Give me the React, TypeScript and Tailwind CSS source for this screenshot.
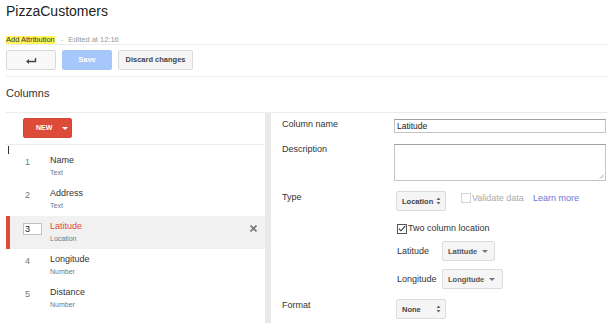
import React from "react";

const columns = [
  { n: "1", name: "Name", type: "Text" },
  { n: "2", name: "Address", type: "Text" },
  { n: "3", name: "Latitude", type: "Location", selected: true },
  { n: "4", name: "Longitude", type: "Number" },
  { n: "5", name: "Distance", type: "Number" },
];

function UpDown() {
  return (
    <svg width="5" height="8" viewBox="0 0 5 8" className="shrink-0">
      <path d="M0.5 3 L2.5 0.5 L4.5 3 Z M0.5 5 L2.5 7.5 L4.5 5 Z" fill="#666" />
    </svg>
  );
}

function Caret({ color = "#777" }: { color?: string }) {
  return (
    <svg width="6" height="3" viewBox="0 0 6 3" className="shrink-0">
      <path d="M0 0 L6 0 L3 3 Z" fill={color} />
    </svg>
  );
}

function Select({ label, w, kind }: { label: string; w: string; kind: "updown" | "caret" }) {
  return (
    <div
      className={`${w} h-[20px] flex items-center bg-[#f5f5f5] border border-[#dcdcdc] rounded-[2px] text-[7.5px] font-bold text-[#444] shrink-0 ${
        kind === "updown" ? "justify-between pl-[5px] pr-[4px]" : "pl-[5px] gap-[5px] text-[#555]"
      }`}
    >
      <span>{label}</span>
      {kind === "updown" ? <UpDown /> : <Caret />}
    </div>
  );
}

export default function App() {
  return (
    <div className="w-[609px] h-[323px] overflow-hidden bg-white font-['Liberation_Sans',Arial,sans-serif] text-[#333]">
      <div className="pl-[6px]">
        {/* Title + attribution */}
        <div className="pt-[3px] h-[19px] text-[14px] leading-[16px] text-[#222]">PizzaCustomers</div>
        <div className="mt-[17px] h-[8px] flex items-center text-[7.5px] leading-[8px]">
          <span className="bg-[#fff65c] text-[#333]">Add Attribution</span>
          <span className="ml-[6px] text-[#bbb]">-</span>
          <span className="ml-[5px] text-[#999]">Edited at 12:16</span>
        </div>
        <div className="h-px bg-[#ebebeb]" />

        {/* Toolbar */}
        <div className="mt-[5px] flex gap-[6px] h-[20px]">
          <div className="w-[50px] h-[20px] flex items-center justify-center bg-[#f8f8f8] border border-[#d9d9d9] rounded-[2px]">
            <svg width="11" height="7" viewBox="0 0 11 7">
              <path d="M2 4.5 H9.5 V1" fill="none" stroke="#444" strokeWidth="1.4" />
              <path d="M0 4.5 L3 2 L3 7 Z" fill="#444" />
            </svg>
          </div>
          <div className="w-[50px] h-[20px] flex items-center justify-center bg-[#a7c7fa] rounded-[2px] text-[7.5px] font-bold text-white">
            Save
          </div>
          <div className="w-[75px] h-[20px] flex items-center justify-center bg-[#f5f5f5] border border-[#dcdcdc] rounded-[2px] text-[7.5px] font-bold text-[#444]">
            Discard changes
          </div>
        </div>
        <div className="mt-[6px] h-px bg-[#ebebeb]" />

        <div className="mt-[10px] h-[13px] text-[11px] leading-[13px] text-[#333]">Columns</div>
        <div className="mt-[12px] h-px bg-[#ebebeb]" />

        {/* Main area */}
        <div className="flex h-[210px]">
          {/* Left list */}
          <div className="w-[259px] flex flex-col">
            <div className="pt-[5px] pl-[17px]">
              <div className="w-[49px] h-[20px] flex items-center bg-[#dd4b39] border border-[#d14836] rounded-[2px] text-white text-[7px] font-bold">
                <span className="ml-[12px]">NEW</span>
                <span className="ml-[10px]">
                  <Caret color="#ffffff" />
                </span>
              </div>
            </div>
            <div className="mt-[6px] h-px bg-[#ebebeb]" />
            <div className="h-[5px]">
              <div className="ml-[2px] mt-[1px] w-px h-[8px] bg-[#333]" />
            </div>
            {columns.map((c) => (
              <div key={c.n} className={`relative flex h-[33px] ${c.selected ? "bg-[#f1f1f1]" : ""}`}>
                <div className={`w-[4px] ${c.selected ? "bg-[#dd4b39]" : ""}`} />
                <div className="ml-[13px] w-[27px]">
                  {c.selected ? (
                    <div className="mt-[7px] w-[19px] h-[12px] bg-white border border-[#c0c0c0] text-[9px] leading-[10px] pl-[1px] text-[#222]">
                      {c.n}
                    </div>
                  ) : (
                    <div className="mt-[7px] pl-[2px] text-[9px] leading-[11px] text-[#777]">{c.n}</div>
                  )}
                </div>
                <div className="pt-[5px] flex flex-col">
                  <span className={`text-[9px] leading-[11px] ${c.selected ? "text-[#dd4b39]" : "text-[#333]"}`}>{c.name}</span>
                  <span className="mt-[2px] text-[7px] leading-[9px] text-[#777]">{c.type}</span>
                </div>
                {c.selected && (
                  <svg width="7" height="7" viewBox="0 0 7 7" className="absolute right-[8px] top-[9px]">
                    <path d="M0.5 0.5 L6.5 6.5 M6.5 0.5 L0.5 6.5" stroke="#777" strokeWidth="1.6" />
                  </svg>
                )}
              </div>
            ))}
          </div>

          {/* Divider strip */}
          <div className="w-[6px] bg-[#e9e9e9]" />

          {/* Right form */}
          <div className="flex-1 pl-[11px] text-[9px] leading-[11px] text-[#333]">
            <div className="mt-[6px] flex">
              <div className="w-[112px]">Column name</div>
              <div className="w-[212px] h-[14px] border border-[#c4c4c4] border-t-[#a0a0a0] px-[2px] text-[8.5px] leading-[12px] text-[#222]">
                Latitude
              </div>
            </div>
            <div className="mt-[11px] flex">
              <div className="w-[112px]">Description</div>
              <div className="relative w-[212px] h-[37px] border border-[#c4c4c4] border-t-[#a0a0a0]">
                <svg width="5" height="5" viewBox="0 0 5 5" className="absolute right-[1px] bottom-[1px]">
                  <path d="M4.5 0.5 L0.5 4.5 M4.5 2.5 L2.5 4.5" stroke="#aaa" strokeWidth="0.8" />
                </svg>
              </div>
            </div>
            <div className="mt-[10px] flex">
              <div className="w-[112px] pt-[1px]">Type</div>
              <div className="flex flex-col">
                <div className="flex items-start ml-[2px]">
                  <Select label="Location" w="w-[50px]" kind="updown" />
                  <div className="ml-[15px] mt-[2px] w-[10px] h-[10px] border border-[#d4d4d4] bg-white" />
                  <span className="ml-[1px] mt-[2px] text-[#aaa]">Validate data</span>
                  <span className="ml-[9px] mt-[2px] text-[#6d74d9]">Learn more</span>
                </div>
                <div className="mt-[12px] ml-[3px] flex items-center">
                  <div className="w-[10px] h-[10px] border border-[#555] bg-white flex items-center justify-center">
                    <svg width="8" height="7" viewBox="0 0 8 7">
                      <path d="M0.8 3.6 L3 5.8 L7.3 0.8" fill="none" stroke="#333" strokeWidth="1.1" />
                    </svg>
                  </div>
                  <span className="ml-[1px]">Two column location</span>
                </div>
                <div className="mt-[7px] ml-[3px] flex items-center">
                  <span className="w-[45px]">Latitude</span>
                  <Select label="Latitude" w="w-[53px]" kind="caret" />
                </div>
                <div className="mt-[8px] ml-[3px] flex items-center">
                  <span className="w-[45px]">Longitude</span>
                  <Select label="Longitude" w="w-[61px]" kind="caret" />
                </div>
              </div>
            </div>
            <div className="mt-[10px] flex">
              <div className="w-[112px] pt-[1px]">Format</div>
              <div className="ml-[2px]">
                <Select label="None" w="w-[50px]" kind="updown" />
              </div>
            </div>
          </div>
        </div>
      </div>
    </div>
  );
}
